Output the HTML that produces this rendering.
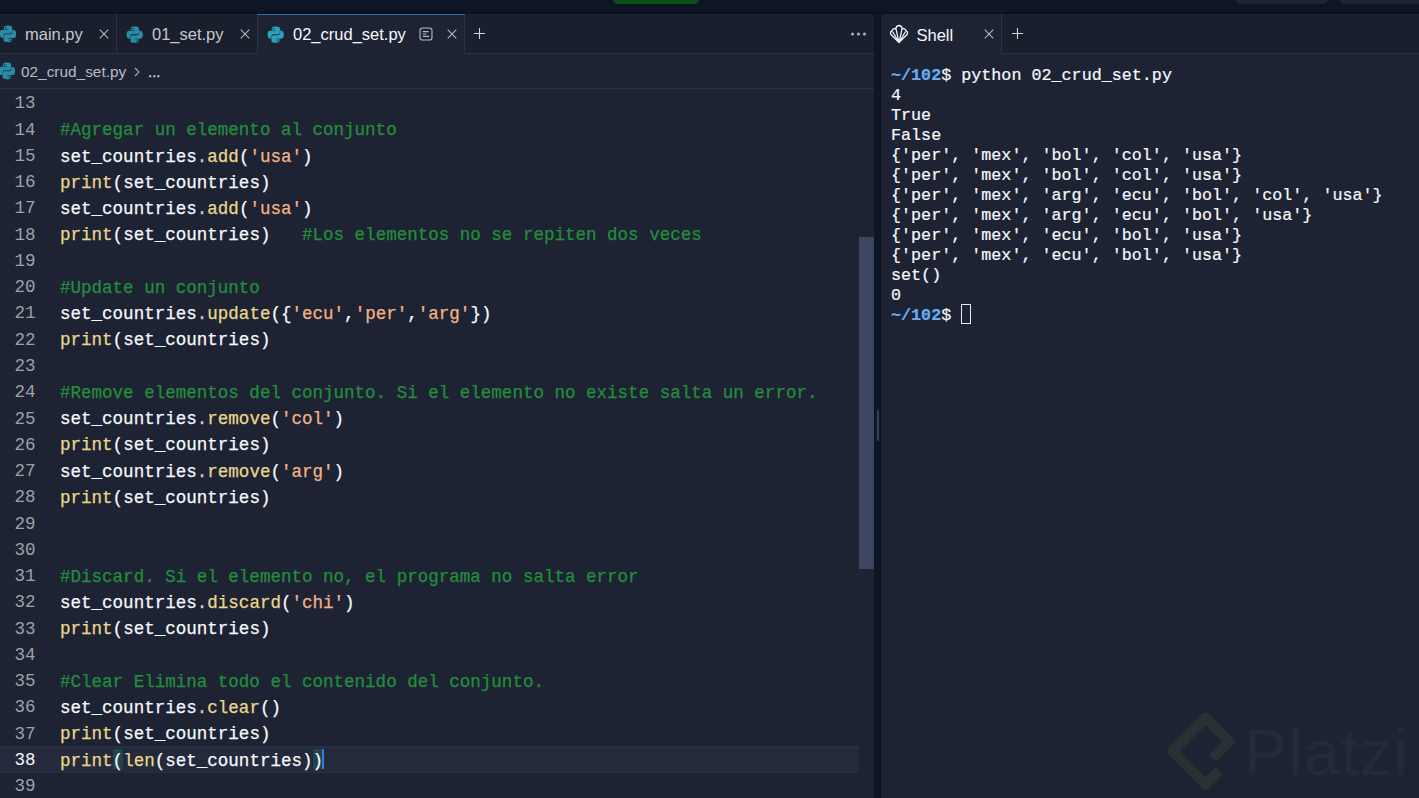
<!DOCTYPE html>
<html><head><meta charset="utf-8">
<style>
*{margin:0;padding:0;box-sizing:border-box}
html,body{width:1419px;height:798px;overflow:hidden;background:#0e1525;font-family:"Liberation Sans",sans-serif}
body{position:relative}
.abs,.ic,.py,.ln,.cl{position:absolute}
#runbtn{left:613px;top:-6px;width:85.5px;height:10px;border-radius:5px;background:#085214}
#tb1{left:1236px;top:-6px;width:92px;height:9.5px;border-radius:5px;background:#1e2434}
#tb2{left:1340px;top:-6px;width:100px;height:9.5px;border-radius:5px;background:#1e2434}
#lpane{left:-10px;top:14px;width:883.5px;height:800px;background:#1e2334;border-top-right-radius:3px;overflow:hidden}
#ltabs{left:-10px;top:14px;width:883.5px;height:40px;background:#1a1f2e;border-bottom:1px solid #2d3346;border-top-right-radius:3px}
.tab{position:absolute;top:14px;height:40px;border-right:1px solid #2d3346}
.tt{position:absolute;font-size:16.5px;color:#c2c8cc;white-space:nowrap}
#crumbb{left:0;top:88px;width:873.5px;height:1px;background:#2d3346}
.ln{left:0;width:35.5px;text-align:right;font-family:"Liberation Mono",monospace;font-size:17.55px;line-height:26.26px;color:#9da2a6;white-space:pre}
.ln.act{color:#f5f9fc}
.cl{left:60px;-webkit-text-stroke:0.25px currentColor;font-family:"Liberation Mono",monospace;font-size:17.55px;line-height:26.26px;color:#f5f9fc;white-space:pre}
#actline{left:0;top:746px;width:859px;height:27px;background:#242a3b;border-top:2px solid #2a2f42;border-bottom:1px solid #282d40}
#rpane{left:881px;top:14px;width:560px;height:800px;background:#1e2334;border-top-left-radius:3px}
#rtabs{left:1001px;top:14px;width:420px;height:40px;background:#1a1f2e;border-bottom:1px solid #2d3346;border-left:1px solid #2d3346}
#sh{left:891px;top:66px;-webkit-text-stroke:0.2px currentColor;font-family:"Liberation Mono",monospace;font-size:16.73px;line-height:20px;color:#f5f9fc;white-space:pre}
.pr{color:#68adf2;font-weight:bold}
#cur{left:961px;top:304px;width:10px;height:20px;border:1px solid #e8ecf0}
.c{color:#238e3c}.f{color:#e9d78c}.s{color:#f3b283}.p{color:#c8ced4}
#thumb{left:859px;top:237px;width:15px;height:332px;background:#3e4560}
#divh{left:877px;top:410px;width:2px;height:31px;background:#3a4154;border-radius:1px}
</style></head><body>
<div class="abs" style="left:0;top:11.5px;width:1419px;height:2.5px;background:#0b101c"></div>
<div id="runbtn" class="abs"></div>
<div id="tb1" class="abs"></div>
<div id="tb2" class="abs"></div>

<div id="lpane" class="abs"></div>
<div id="ltabs" class="abs"></div>
<div class="tab" style="left:-10px;width:127px;background:#1a1f2e;border-bottom:1px solid #2d3346"></div>
<div class="tab" style="left:117px;width:140.5px;background:#1a1f2e;border-bottom:1px solid #2d3346"></div>
<div class="tab" style="left:257px;width:208px;background:#1e2334;border-left:1px solid #2d3346"></div>
<div class="abs" style="left:257px;top:14px;width:208px;height:1.4px;background:#2a68b8"></div>

<svg class="py" viewBox="0 0 16 16" width="17.8" height="17.8" style="left:-1.5px;top:25.2px"><path fill="#2a8ba4" d="M7.9 0.5C4.2 0.5 4.4 2.1 4.4 2.1V3.8H8V4.3H3C3 4.3 0.5 4 0.5 7.9C0.5 11.7 2.7 11.6 2.7 11.6H4V9.8C4 9.8 3.9 7.6 6.2 7.6H9.8C9.8 7.6 11.9 7.6 11.9 5.6V2.3C11.9 2.3 12.2 0.5 7.9 0.5ZM5.9 1.6A0.65 0.65 0 1 1 5.9 2.9A0.65 0.65 0 1 1 5.9 1.6Z"/><path fill="#2a8ba4" d="M8.1 15.5C11.8 15.5 11.6 13.9 11.6 13.9V12.2H8V11.7H13C13 11.7 15.5 12 15.5 8.1C15.5 4.3 13.3 4.4 13.3 4.4H12V6.2C12 6.2 12.1 8.4 9.8 8.4H6.2C6.2 8.4 4.1 8.4 4.1 10.4V13.7C4.1 13.7 3.8 15.5 8.1 15.5ZM10.1 14.4A0.65 0.65 0 1 1 10.1 13.1A0.65 0.65 0 1 1 10.1 14.4Z"/></svg>
<div class="tt" style="left:25px;top:25px">main.py</div>
<svg class="ic" width="10" height="10" viewBox="0 0 10 10" style="left:98.5px;top:28.8px"><path d="M0.7 0.7L9.3 9.3M9.3 0.7L0.7 9.3" stroke="#b4bac1" stroke-width="1.05" fill="none"/></svg>
<svg class="py" viewBox="0 0 16 16" width="17.4" height="17.4" style="left:125.8px;top:25.8px"><path fill="#2a8ba4" d="M7.9 0.5C4.2 0.5 4.4 2.1 4.4 2.1V3.8H8V4.3H3C3 4.3 0.5 4 0.5 7.9C0.5 11.7 2.7 11.6 2.7 11.6H4V9.8C4 9.8 3.9 7.6 6.2 7.6H9.8C9.8 7.6 11.9 7.6 11.9 5.6V2.3C11.9 2.3 12.2 0.5 7.9 0.5ZM5.9 1.6A0.65 0.65 0 1 1 5.9 2.9A0.65 0.65 0 1 1 5.9 1.6Z"/><path fill="#2a8ba4" d="M8.1 15.5C11.8 15.5 11.6 13.9 11.6 13.9V12.2H8V11.7H13C13 11.7 15.5 12 15.5 8.1C15.5 4.3 13.3 4.4 13.3 4.4H12V6.2C12 6.2 12.1 8.4 9.8 8.4H6.2C6.2 8.4 4.1 8.4 4.1 10.4V13.7C4.1 13.7 3.8 15.5 8.1 15.5ZM10.1 14.4A0.65 0.65 0 1 1 10.1 13.1A0.65 0.65 0 1 1 10.1 14.4Z"/></svg>
<div class="tt" style="left:152px;top:25px">01_set.py</div>
<svg class="ic" width="10" height="10" viewBox="0 0 10 10" style="left:239.8px;top:29.2px"><path d="M0.7 0.7L9.3 9.3M9.3 0.7L0.7 9.3" stroke="#b4bac1" stroke-width="1.05" fill="none"/></svg>
<svg class="py" viewBox="0 0 16 16" width="17.4" height="17.4" style="left:266.6px;top:25.6px"><path fill="#2aa0bf" d="M7.9 0.5C4.2 0.5 4.4 2.1 4.4 2.1V3.8H8V4.3H3C3 4.3 0.5 4 0.5 7.9C0.5 11.7 2.7 11.6 2.7 11.6H4V9.8C4 9.8 3.9 7.6 6.2 7.6H9.8C9.8 7.6 11.9 7.6 11.9 5.6V2.3C11.9 2.3 12.2 0.5 7.9 0.5ZM5.9 1.6A0.65 0.65 0 1 1 5.9 2.9A0.65 0.65 0 1 1 5.9 1.6Z"/><path fill="#2aa0bf" d="M8.1 15.5C11.8 15.5 11.6 13.9 11.6 13.9V12.2H8V11.7H13C13 11.7 15.5 12 15.5 8.1C15.5 4.3 13.3 4.4 13.3 4.4H12V6.2C12 6.2 12.1 8.4 9.8 8.4H6.2C6.2 8.4 4.1 8.4 4.1 10.4V13.7C4.1 13.7 3.8 15.5 8.1 15.5ZM10.1 14.4A0.65 0.65 0 1 1 10.1 13.1A0.65 0.65 0 1 1 10.1 14.4Z"/></svg>
<div class="tt" style="left:293px;top:25px;color:#f5f9fc">02_crud_set.py</div>
<svg class="ic" width="14" height="14" viewBox="0 0 14 14" style="left:419.3px;top:26.5px"><rect x="1" y="1" width="12" height="12" rx="2.6" fill="none" stroke="#b4bac1" stroke-width="1.1"/><path d="M3.8 4.6H9.6M3.8 7H7.2M3.8 9.4H10.2" stroke="#b4bac1" stroke-width="1.1"/></svg>
<svg class="ic" width="10" height="10" viewBox="0 0 10 10" style="left:446.8px;top:29px"><path d="M0.7 0.7L9.3 9.3M9.3 0.7L0.7 9.3" stroke="#b4bac1" stroke-width="1.05" fill="none"/></svg>
<svg class="ic" width="13" height="13" viewBox="0 0 13 13" style="left:473px;top:27.3px"><path d="M6.5 1V12M1 6.5H12" stroke="#d0d5da" stroke-width="1.1" fill="none"/></svg>
<svg class="ic" width="18" height="6" viewBox="0 0 18 6" style="left:850px;top:31px"><circle cx="2.5" cy="3" r="1.6" fill="#a9b0b8"/><circle cx="8.5" cy="3" r="1.6" fill="#a9b0b8"/><circle cx="14.5" cy="3" r="1.6" fill="#a9b0b8"/></svg>

<svg class="py" viewBox="0 0 16 16" width="17.8" height="17.8" style="left:-2.5px;top:62px"><path fill="#2a8ba4" d="M7.9 0.5C4.2 0.5 4.4 2.1 4.4 2.1V3.8H8V4.3H3C3 4.3 0.5 4 0.5 7.9C0.5 11.7 2.7 11.6 2.7 11.6H4V9.8C4 9.8 3.9 7.6 6.2 7.6H9.8C9.8 7.6 11.9 7.6 11.9 5.6V2.3C11.9 2.3 12.2 0.5 7.9 0.5ZM5.9 1.6A0.65 0.65 0 1 1 5.9 2.9A0.65 0.65 0 1 1 5.9 1.6Z"/><path fill="#2a8ba4" d="M8.1 15.5C11.8 15.5 11.6 13.9 11.6 13.9V12.2H8V11.7H13C13 11.7 15.5 12 15.5 8.1C15.5 4.3 13.3 4.4 13.3 4.4H12V6.2C12 6.2 12.1 8.4 9.8 8.4H6.2C6.2 8.4 4.1 8.4 4.1 10.4V13.7C4.1 13.7 3.8 15.5 8.1 15.5ZM10.1 14.4A0.65 0.65 0 1 1 10.1 13.1A0.65 0.65 0 1 1 10.1 14.4Z"/></svg>
<div class="tt" style="left:21px;top:62.6px;font-size:15.4px;color:#b5bbc3">02_crud_set.py</div>
<svg class="ic" width="8" height="10" viewBox="0 0 8 10" style="left:132.5px;top:66.5px"><path d="M2 1L6 5L2 9" stroke="#a9b0b8" stroke-width="1.1" fill="none"/></svg>
<div class="tt" style="left:148px;top:62.6px;font-size:15px;color:#d0d5da;-webkit-text-stroke:0.3px #d0d5da">...</div>
<div id="crumbb" class="abs"></div>

<div id="actline" class="abs"></div>
<div class="abs" style="left:112.66px;top:749px;width:10.53px;height:19.5px;background:#22434d"></div>
<div class="abs" style="left:312.8px;top:749px;width:10.53px;height:19.5px;background:#22434d"></div>
<div class="ln" style="top:90.40px">13</div>
<div class="ln" style="top:116.66px">14</div>
<div class="cl" style="top:117.36px"><span class="c">#Agregar un elemento al conjunto</span></div>
<div class="ln" style="top:142.92px">15</div>
<div class="cl" style="top:143.62px">set_countries<span class="p">.</span><span class="f">add</span>(<span class="s">&#x27;usa&#x27;</span>)</div>
<div class="ln" style="top:169.18px">16</div>
<div class="cl" style="top:169.88px"><span class="f">print</span>(set_countries)</div>
<div class="ln" style="top:195.44px">17</div>
<div class="cl" style="top:196.14px">set_countries<span class="p">.</span><span class="f">add</span>(<span class="s">&#x27;usa&#x27;</span>)</div>
<div class="ln" style="top:221.70px">18</div>
<div class="cl" style="top:222.40px"><span class="f">print</span>(set_countries)   <span class="c">#Los elementos no se repiten dos veces</span></div>
<div class="ln" style="top:247.96px">19</div>
<div class="ln" style="top:274.22px">20</div>
<div class="cl" style="top:274.92px"><span class="c">#Update un conjunto</span></div>
<div class="ln" style="top:300.48px">21</div>
<div class="cl" style="top:301.18px">set_countries<span class="p">.</span><span class="f">update</span>({<span class="s">&#x27;ecu&#x27;</span>,<span class="s">&#x27;per&#x27;</span>,<span class="s">&#x27;arg&#x27;</span>})</div>
<div class="ln" style="top:326.74px">22</div>
<div class="cl" style="top:327.44px"><span class="f">print</span>(set_countries)</div>
<div class="ln" style="top:353.00px">23</div>
<div class="ln" style="top:379.26px">24</div>
<div class="cl" style="top:379.96px"><span class="c">#Remove elementos del conjunto. Si el elemento no existe salta un error.</span></div>
<div class="ln" style="top:405.52px">25</div>
<div class="cl" style="top:406.22px">set_countries<span class="p">.</span><span class="f">remove</span>(<span class="s">&#x27;col&#x27;</span>)</div>
<div class="ln" style="top:431.78px">26</div>
<div class="cl" style="top:432.48px"><span class="f">print</span>(set_countries)</div>
<div class="ln" style="top:458.04px">27</div>
<div class="cl" style="top:458.74px">set_countries<span class="p">.</span><span class="f">remove</span>(<span class="s">&#x27;arg&#x27;</span>)</div>
<div class="ln" style="top:484.30px">28</div>
<div class="cl" style="top:485.00px"><span class="f">print</span>(set_countries)</div>
<div class="ln" style="top:510.56px">29</div>
<div class="ln" style="top:536.82px">30</div>
<div class="ln" style="top:563.08px">31</div>
<div class="cl" style="top:563.78px"><span class="c">#Discard. Si el elemento no, el programa no salta error</span></div>
<div class="ln" style="top:589.34px">32</div>
<div class="cl" style="top:590.04px">set_countries<span class="p">.</span><span class="f">discard</span>(<span class="s">&#x27;chi&#x27;</span>)</div>
<div class="ln" style="top:615.60px">33</div>
<div class="cl" style="top:616.30px"><span class="f">print</span>(set_countries)</div>
<div class="ln" style="top:641.86px">34</div>
<div class="ln" style="top:668.12px">35</div>
<div class="cl" style="top:668.82px"><span class="c">#Clear Elimina todo el contenido del conjunto.</span></div>
<div class="ln" style="top:694.38px">36</div>
<div class="cl" style="top:695.08px">set_countries<span class="p">.</span><span class="f">clear</span>()</div>
<div class="ln" style="top:720.64px">37</div>
<div class="cl" style="top:721.34px"><span class="f">print</span>(set_countries)</div>
<div class="ln act" style="top:746.90px">38</div>
<div class="cl" style="top:747.60px"><span class="f">print</span>(<span class="f">len</span>(set_countries))</div>
<div class="ln" style="top:773.16px">39</div>
<div class="abs" style="left:322.2px;top:749px;width:2.3px;height:19.8px;background:#2b7fe0"></div>
<div id="thumb" class="abs"></div>
<div id="divh" class="abs"></div>

<div id="rpane" class="abs"></div>
<div id="rtabs" class="abs"></div>
<svg class="ic" width="20" height="20" viewBox="0 0 20 20" style="left:889px;top:24px"><path d="M10 18.5L2.2 10.8C1 9.6 1.3 7.4 3 6.8C3.4 4.8 5.3 4.2 6.7 4.8C7.3 2.2 9 1.5 10 1.5C11 1.5 12.7 2.2 13.3 4.8C14.7 4.2 16.6 4.8 17 6.8C18.7 7.4 19 9.6 17.8 10.8Z" fill="none" stroke="#f5f9fc" stroke-width="1.3" stroke-linejoin="round"/><path d="M10 18.5L3.5 7.5M10 18.5L7 5M10 18.5L13 5M10 18.5L16.5 7.5" stroke="#f5f9fc" stroke-width="1.2" fill="none"/></svg>
<div class="tt" style="left:916.5px;top:25.8px;color:#f5f9fc">Shell</div>
<svg class="ic" width="10" height="10" viewBox="0 0 10 10" style="left:983.8px;top:28.9px"><path d="M0.7 0.7L9.3 9.3M9.3 0.7L0.7 9.3" stroke="#b4bac1" stroke-width="1.05" fill="none"/></svg>
<svg class="ic" width="13" height="13" viewBox="0 0 13 13" style="left:1011px;top:27px"><path d="M6.5 1V12M1 6.5H12" stroke="#d0d5da" stroke-width="1.1" fill="none"/></svg>
<div id="sh" class="abs"><span class="pr">~/102</span>$ python 02_crud_set.py
4
True
False
{'per', 'mex', 'bol', 'col', 'usa'}
{'per', 'mex', 'bol', 'col', 'usa'}
{'per', 'mex', 'arg', 'ecu', 'bol', 'col', 'usa'}
{'per', 'mex', 'arg', 'ecu', 'bol', 'usa'}
{'per', 'mex', 'ecu', 'bol', 'usa'}
{'per', 'mex', 'ecu', 'bol', 'usa'}
set()
0
<span class="pr">~/102</span>$ </div>
<div id="cur" class="abs"></div>

<svg class="ic" width="1419" height="798" viewBox="0 0 1419 798" style="left:0;top:0"><path d="M1212.5 758.4L1229.3 741.6L1205.5 717.8L1172.6 751.1L1205.5 784.4L1219.5 770.4" fill="none" stroke="#283134" stroke-width="10.5" stroke-linejoin="round"/></svg>
<div class="tt" style="left:1244px;top:716px;font-size:64.5px;letter-spacing:1.2px;color:#242a3b">Platzi</div>
</body></html>
